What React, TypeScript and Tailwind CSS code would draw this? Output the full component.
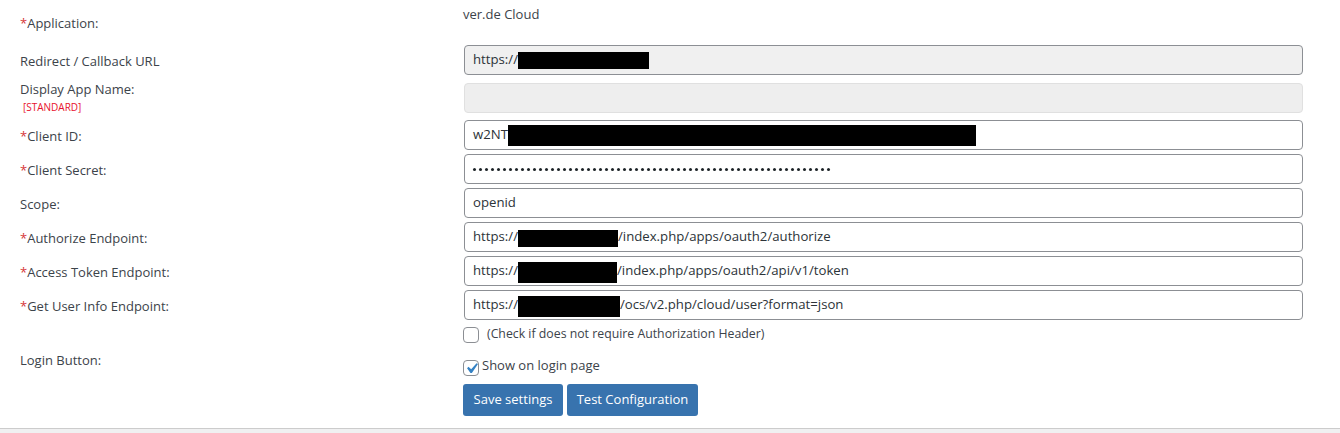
import React from "react";

const font = { fontFamily: '"Open Sans", "Noto Sans", Arial, sans-serif' };

function Label({ req, children }: { req?: boolean; children: React.ReactNode }) {
  return (
    <span className="text-[13px] font-medium text-[#3c434a]">
      {req && <span className="text-[#d63638]">*</span>}
      {children}
    </span>
  );
}

function Box({ w, h, mt = 0 }: { w: number; h: number; mt?: number }) {
  return (
    <span
      className="inline-block bg-black shrink-0"
      style={{ width: w, height: h, marginTop: mt }}
    />
  );
}

function Field({
  children,
  variant = "normal",
}: {
  children?: React.ReactNode;
  variant?: "normal" | "readonly" | "disabled";
}) {
  const cls =
    variant === "readonly"
      ? "bg-[#f0f0f0] border-[#8c8f94]"
      : variant === "disabled"
      ? "bg-[#eeeeee] border-[#e0e0e0]"
      : "bg-white border-[#8c8f94]";
  return (
    <div
      className={`w-[839px] h-[30px] border rounded-[4px] px-[8px] flex items-center text-[13.2px] text-[#2c3338] whitespace-nowrap overflow-hidden ${cls}`}
    >
      {children}
    </div>
  );
}

function Row({ label, children }: { label: React.ReactNode; children: React.ReactNode }) {
  return (
    <div className="flex items-center">
      <div className="w-[444px] shrink-0">{label}</div>
      {children}
    </div>
  );
}

const dots = Array.from({ length: 60 }, (_, i) => i);

export default function App() {
  return (
    <div className="w-[1340px] h-[433px] bg-[#f0f0f1]" style={font}>
      <div className="h-[429px] bg-white border-b border-[#cccccc] pl-[20px] flex flex-col">
        {/* Application */}
        <div className="flex h-[45px]">
          <div className="w-[443px] shrink-0 pt-[10px]">
            <Label req>Application:</Label>
          </div>
          <div className="pt-[5px] text-[13px] text-[#3c434a]">ver.de Cloud</div>
        </div>

        {/* Redirect */}
        <Row label={<span className="-mt-[1px] block"><Label>Redirect / Callback URL</Label></span>}>
          <Field variant="readonly">
            <span>https://</span>
            <Box w={131} h={17} mt={1} />
          </Field>
        </Row>

        {/* Display App Name */}
        <div className="flex mt-[8px] h-[29px]">
          <div className="w-[444px] shrink-0 flex flex-col">
            <span className="leading-[14px] -mt-[2px]">
              <Label>Display App Name:</Label>
            </span>
            <span className="text-[10px] text-[#e8112d] pl-[3px] mt-[4px] leading-[14px]">
              [STANDARD]
            </span>
          </div>
          <Field variant="disabled" />
        </div>

        <div className="flex flex-col gap-[4px] mt-[8px]">
          <Row label={<Label req>Client ID:</Label>}>
            <Field>
              <span>w2NT</span>
              <Box w={468} h={21} mt={1} />
            </Field>
          </Row>
          <Row label={<Label req>Client Secret:</Label>}>
            <Field>
              <span className="flex gap-[3px] pt-[1px]">
                {dots.map((i) => (
                  <span key={i} className="w-[3px] h-[3px] rounded-full bg-[#1d2327]" />
                ))}
              </span>
            </Field>
          </Row>
          <Row label={<Label>Scope:</Label>}>
            <Field>openid</Field>
          </Row>
          <Row label={<Label req>Authorize Endpoint:</Label>}>
            <Field>
              <span>https://</span>
              <Box w={100} h={17} mt={2} />
              <span>/index.php/apps/oauth2/authorize</span>
            </Field>
          </Row>
          <Row label={<Label req>Access Token Endpoint:</Label>}>
            <Field>
              <span>https://</span>
              <Box w={99} h={21} mt={2} />
              <span>/index.php/apps/oauth2/api/v1/token</span>
            </Field>
          </Row>
          <Row label={<Label req>Get User Info Endpoint:</Label>}>
            <Field>
              <span>https://</span>
              <Box w={102} h={21} mt={2} />
              <span>/ocs/v2.php/cloud/user?format=json</span>
            </Field>
          </Row>
        </div>

        {/* Checkbox row */}
        <div className="flex items-center mt-[7px] pl-[443px]">
          <span className="w-[16px] h-[16px] border border-[#8c8f94] rounded-[4px] bg-white shrink-0" />
          <span className="ml-[8px] text-[12.3px] text-[#3c434a] -mt-[2px]">
            (Check if does not require Authorization Header)
          </span>
        </div>

        {/* Login button */}
        <div className="flex mt-[16px]">
          <div className="w-[443px] shrink-0 -mt-[12px]">
            <Label>Login Button:</Label>
          </div>
          <div className="flex flex-col">
            <div className="flex items-center">
              <span className="relative w-[16px] h-[16px] border border-[#8c8f94] rounded-[4px] bg-white shrink-0">
                <svg
                  className="absolute left-[-3px] top-[-3px]"
                  width="21"
                  height="21"
                  viewBox="0 0 20 20"
                >
                  <path
                    d="M14.83 4.89l1.34.94-5.81 8.38H9.02L5.78 9.67l1.34-1.25 2.57 2.4z"
                    fill="#3582c4"
                  />
                </svg>
              </span>
              <span className="ml-[3px] text-[13px] text-[#3c434a] -mt-[3px]">
                Show on login page
              </span>
            </div>
            <div className="flex gap-[4px] mt-[8px]">
              <button className="h-[32px] rounded-[3px] bg-[#3873ae] text-white text-[13px] w-[100px] whitespace-nowrap">
                Save settings
              </button>
              <button className="h-[32px] rounded-[3px] bg-[#3873ae] text-white text-[13px] w-[131px] whitespace-nowrap">
                Test Configuration
              </button>
            </div>
          </div>
        </div>
      </div>
    </div>
  );
}
